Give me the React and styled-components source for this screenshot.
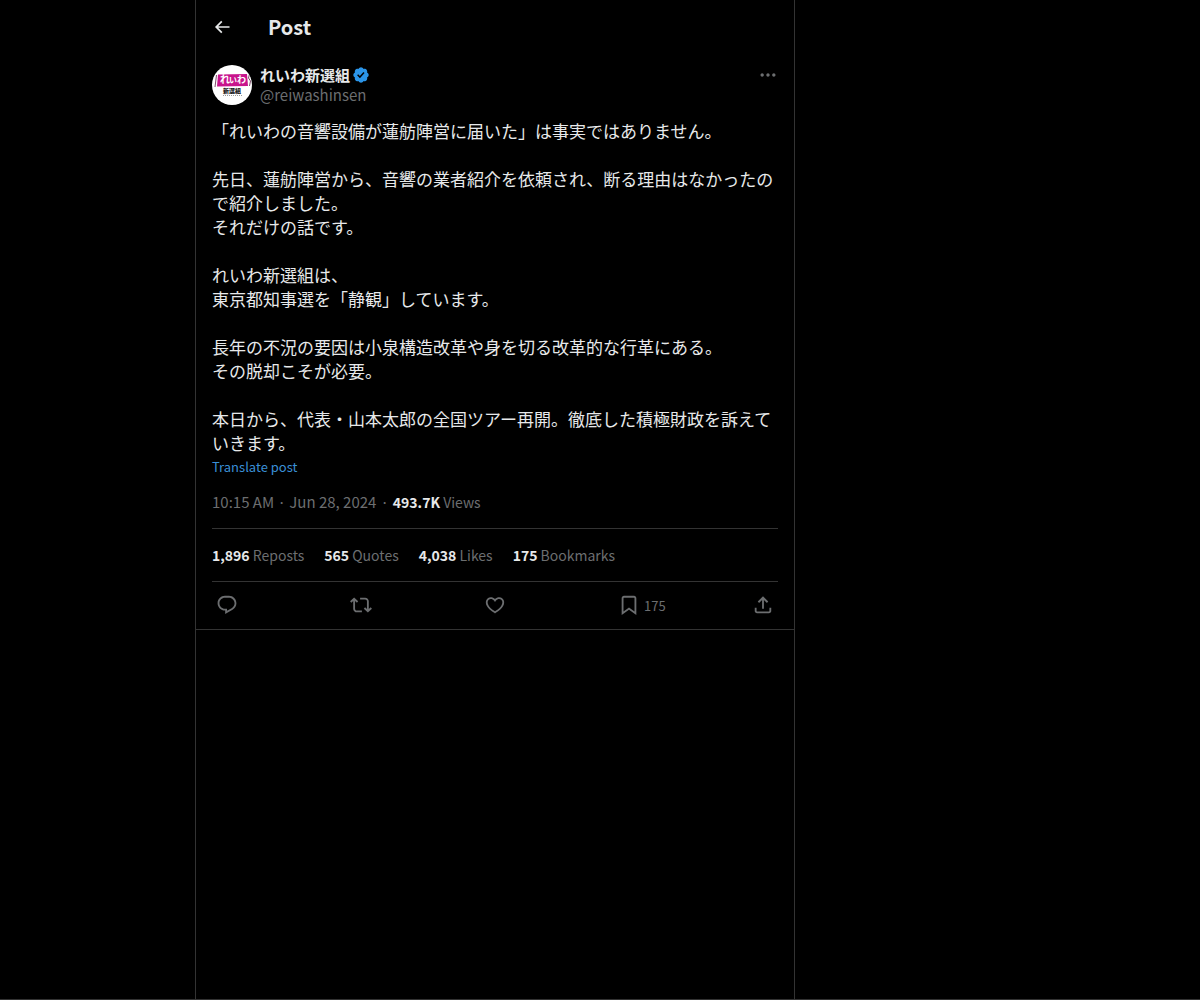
import React from 'react';
import styled, { createGlobalStyle } from 'styled-components';

const GlobalStyle = createGlobalStyle`
  * {
    box-sizing: border-box;
  }

  body {
    margin: 0;
    background-color: #000;
    color: #e7e9ea;
    font-family: "Noto Sans CJK JP", "Noto Sans", sans-serif;
    font-size: 15px;
    line-height: 20px;
  }

  button {
    padding: 0;
    border: none;
    background: none;
    color: inherit;
    font: inherit;
    cursor: pointer;
  }

  a {
    color: inherit;
    text-decoration: none;
  }
`;

const Page = styled.div`
  display: grid;
  grid-template-columns: minmax(0, 195px) minmax(0, 600px) 1fr;
  min-height: 100vh;
  border-bottom: 1px solid #333;
`;

const Column = styled.main`
  grid-column: 2;
  border-left: 1px solid #333;
  border-right: 1px solid #333;
`;

const Header = styled.header`
  display: flex;
  align-items: center;
  height: 53px;
  padding: 0 16px;
`;

const BackButton = styled.button`
  display: flex;
  width: 56px;
`;

const Title = styled.h1`
  margin: 0;
  font-size: 20px;
  line-height: 24px;
  font-weight: 700;
`;

const Article = styled.article`
  padding: 12px 16px 0;
  border-bottom: 1px solid #333;
`;

const Author = styled.div`
  display: flex;
  gap: 8px;
`;

const AuthorText = styled.div`
  display: flex;
  flex-direction: column;
  flex: 1;
`;

const Name = styled.a`
  display: flex;
  align-items: center;
  gap: 2px;
  font-weight: 700;
`;

const Handle = styled.a`
  color: #6c6e70;
`;

const MoreButton = styled.button`
  display: flex;
  align-self: flex-start;
  color: #6c6e70;
`;

const PostText = styled.p`
  margin: 14px 0 2px;
  font-size: 17px;
  line-height: 24px;
  white-space: pre-wrap;
`;

const Translate = styled.button`
  display: block;
  font-size: 13px;
  line-height: 20px;
  color: #3a8fd6;
`;

const Meta = styled.div`
  display: flex;
  gap: 4px;
  padding: 15px 0 16px;
  color: #6c6e70;
`;

const Views = styled.span`
  font-size: 14px;
`;

const Strong = styled.strong`
  font-weight: 700;
  color: #e7e9ea;
`;

const Stats = styled.div`
  display: flex;
  flex-wrap: wrap;
  gap: 20px;
  padding: 16px 0;
  border-top: 1px solid #333;
  border-bottom: 1px solid #333;
  font-size: 14px;
  color: #6c6e70;
`;

const Actions = styled.div`
  display: flex;
  padding: 12px 4px 13px;
  color: #6c6e70;
`;

const ActionCell = styled.div`
  display: flex;
  flex: ${(props) => (props.$last ? 'none' : 1)};
`;

const ActionButton = styled.button`
  display: flex;
  align-items: flex-end;
  gap: 4px;
  font-size: 13px;
`;

const Svg = styled.svg`
  display: block;
  flex: none;
  width: ${(props) => props.$size}px;
  height: ${(props) => props.$size}px;
  fill: ${(props) => props.$color || 'currentColor'};
`;

const paths = {
  back: 'M7.414 13l5.043 5.04-1.414 1.42L3.586 12l7.457-7.46 1.414 1.42L7.414 11H21v2H7.414z',
  more: 'M3 12c0-1.1.9-2 2-2s2 .9 2 2-.9 2-2 2-2-.9-2-2zm9 2c1.1 0 2-.9 2-2s-.9-2-2-2-2 .9-2 2 .9 2 2 2zm7 0c1.1 0 2-.9 2-2s-.9-2-2-2-2 .9-2 2 .9 2 2 2z',
  reply: 'M1.751 10c0-4.42 3.584-8 8.005-8h4.366c4.49 0 8.129 3.64 8.129 8.13 0 2.96-1.607 5.68-4.196 7.11l-8.054 4.46v-3.69h-.067c-4.49.1-8.183-3.51-8.183-8.01zm8.005-6c-3.317 0-6.005 2.69-6.005 6 0 3.37 2.77 6.08 6.138 6.01l.351-.01h1.761v2.3l5.087-2.81c1.951-1.08 3.163-3.13 3.163-5.36 0-3.39-2.744-6.13-6.129-6.13H9.756z',
  repost: 'M4.5 3.88l4.432 4.14-1.364 1.46L5.5 7.55V16c0 1.1.896 2 2 2H13v2H7.5c-2.209 0-4-1.79-4-4V7.55L1.432 9.48.068 8.02 4.5 3.88zM16.5 6H11V4h5.5c2.209 0 4 1.79 4 4v8.45l2.068-1.93 1.364 1.46-4.432 4.14-4.432-4.14 1.364-1.46 2.068 1.93V8c0-1.1-.896-2-2-2z',
  like: 'M16.697 5.5c-1.222-.06-2.679.51-3.89 2.16l-.805 1.09-.806-1.09C9.984 6.01 8.526 5.44 7.304 5.5c-1.243.07-2.349.78-2.91 1.91-.552 1.12-.633 2.78.479 4.82 1.074 1.97 3.257 4.27 7.129 6.61 3.87-2.34 6.052-4.64 7.126-6.61 1.111-2.04 1.03-3.7.477-4.82-.561-1.13-1.666-1.84-2.908-1.91zm4.187 7.69c-1.351 2.48-4.001 5.12-8.379 7.67l-.503.3-.504-.3c-4.379-2.55-7.029-5.19-8.382-7.67-1.36-2.5-1.41-4.86-.514-6.67.887-1.79 2.647-2.91 4.601-3.01 1.651-.09 3.368.56 4.798 2.01 1.429-1.45 3.146-2.1 4.796-2.01 1.954.1 3.714 1.22 4.601 3.01.896 1.81.846 4.17-.514 6.67z',
  bookmark: 'M4 4.5C4 3.12 5.119 2 6.5 2h11C18.881 2 20 3.12 20 4.5v18.44l-8-5.71-8 5.71V4.5zM6.5 4c-.276 0-.5.22-.5.5v14.56l6-4.29 6 4.29V4.5c0-.28-.224-.5-.5-.5h-11z',
  share: 'M12 2.59l5.7 5.7-1.41 1.42L13 6.41V16h-2V6.41l-3.3 3.3-1.41-1.42L12 2.59zM21 15l-.02 3.51c0 1.38-1.12 2.49-2.5 2.49H5.5C4.11 21 3 19.88 3 18.5V15h2v3.5c0 .28.22.5.5.5h12.98c.28 0 .5-.22.5-.5L19 15h2z',
  verified: 'M20.396 11c-.018-.646-.215-1.275-.57-1.816-.354-.54-.852-.972-1.438-1.246.223-.607.27-1.264.14-1.897-.131-.634-.437-1.218-.882-1.687-.47-.445-1.053-.75-1.687-.882-.633-.13-1.29-.083-1.897.14-.273-.587-.704-1.086-1.245-1.44S11.647 1.62 11 1.604c-.646.017-1.273.213-1.813.568s-.969.854-1.24 1.44c-.608-.223-1.267-.272-1.902-.14-.635.13-1.22.436-1.69.882-.445.47-.749 1.055-.878 1.688-.13.633-.08 1.29.144 1.896-.587.274-1.087.705-1.443 1.245-.356.54-.555 1.17-.574 1.817.02.647.218 1.276.574 1.817.356.54.856.972 1.443 1.245-.224.606-.274 1.263-.144 1.896.13.634.433 1.218.877 1.688.47.443 1.054.747 1.687.878.633.132 1.29.084 1.897-.136.274.586.705 1.084 1.246 1.439.54.354 1.17.551 1.816.569.647-.016 1.276-.213 1.817-.567s.972-.854 1.245-1.44c.604.239 1.266.296 1.903.164.636-.132 1.22-.447 1.68-.907.46-.46.776-1.044.908-1.681s.075-1.299-.165-1.903c.586-.274 1.084-.705 1.439-1.246.354-.54.551-1.17.569-1.816zM9.662 14.85l-3.429-3.428 1.293-1.302 2.072 2.072 4.4-4.794 1.347 1.246z',
};

const Icon = ({ name, size, color }) => (
  <Svg
    viewBox={name === 'verified' ? '0 0 22 22' : '0 0 24 24'}
    $size={size}
    $color={color}
    aria-hidden="true"
  >
    <path d={paths[name]} />
  </Svg>
);

const Avatar = () => (
  <Svg viewBox="0 0 40 40" $size={40} aria-hidden="true">
    <defs>
      <clipPath id="avatar">
        <circle cx="20" cy="20" r="20" />
      </clipPath>
    </defs>
    <g clipPath="url(#avatar)">
      <rect width="40" height="40" fill="#fff" />
      <path d="M6 9.500 35 9l1 12L5 21.500z" fill="#c8148c" />
      <path d="M4.500 10 3 22M37.500 9l-1 4 2 3-1 5" stroke="#7b4a68" strokeWidth="1" fill="none" />
      <text x="8" y="18" fontSize="10" fontWeight="700" fill="#fff">れ</text>
      <text x="17" y="18" fontSize="8" fontWeight="700" fill="#fff">い</text>
      <text x="25" y="18" fontSize="9" fontWeight="700" fill="#fff">わ</text>
      <text x="20" y="28" fontSize="6" fontWeight="900" textAnchor="middle" fill="#222">新選組</text>
      <path d="M11 30.500h19" stroke="#999" strokeWidth="1" strokeDasharray="1 1" />
    </g>
  </Svg>
);

const postText = `「れいわの音響設備が蓮舫陣営に届いた」は事実ではありません。

先日、蓮舫陣営から、音響の業者紹介を依頼され、断る理由はなかったので紹介しました。
それだけの話です。

れいわ新選組は、
東京都知事選を「静観」しています。

長年の不況の要因は小泉構造改革や身を切る改革的な行革にある。
その脱却こそが必要。

本日から、代表・山本太郎の全国ツアー再開。徹底した積極財政を訴えていきます。`;

const stats = [
  { value: '1,896', label: 'Reposts' },
  { value: '565', label: 'Quotes' },
  { value: '4,038', label: 'Likes' },
  { value: '175', label: 'Bookmarks' },
];

const actions = [
  { icon: 'reply', label: 'Reply' },
  { icon: 'repost', label: 'Repost' },
  { icon: 'like', label: 'Like' },
  { icon: 'bookmark', label: 'Bookmark', count: '175' },
  { icon: 'share', label: 'Share' },
];

const App = () => {
  return (
    <>
      <GlobalStyle />
      <Page>
        <Column>
          <Header>
            <BackButton aria-label="Back">
              <Icon name="back" size={20} />
            </BackButton>
            <Title>Post</Title>
          </Header>

          <Article>
            <Author>
              <Avatar />
              <AuthorText>
                <Name href="#profile">
                  れいわ新選組
                  <Icon name="verified" size={18} color="#2b95e9" />
                </Name>
                <Handle href="#profile">@reiwashinsen</Handle>
              </AuthorText>
              <MoreButton aria-label="More">
                <Icon name="more" size={20} />
              </MoreButton>
            </Author>

            <PostText lang="ja">{postText}</PostText>
            <Translate>Translate post</Translate>

            <Meta>
              <span>10:15 AM · Jun 28, 2024</span>
              <span>·</span>
              <Views><Strong>493.7K</Strong> Views</Views>
            </Meta>

            <Stats>
              {stats.map((stat) => (
                <span key={stat.label}>
                  <Strong>{stat.value}</Strong> {stat.label}
                </span>
              ))}
            </Stats>

            <Actions>
              {actions.map((action) => (
                <ActionCell key={action.icon} $last={action.icon === 'share'}>
                  <ActionButton aria-label={action.label}>
                    <Icon name={action.icon} size={22} />
                    {action.count && <span>{action.count}</span>}
                  </ActionButton>
                </ActionCell>
              ))}
            </Actions>
          </Article>
        </Column>
      </Page>
    </>
  );
};

export default App;
